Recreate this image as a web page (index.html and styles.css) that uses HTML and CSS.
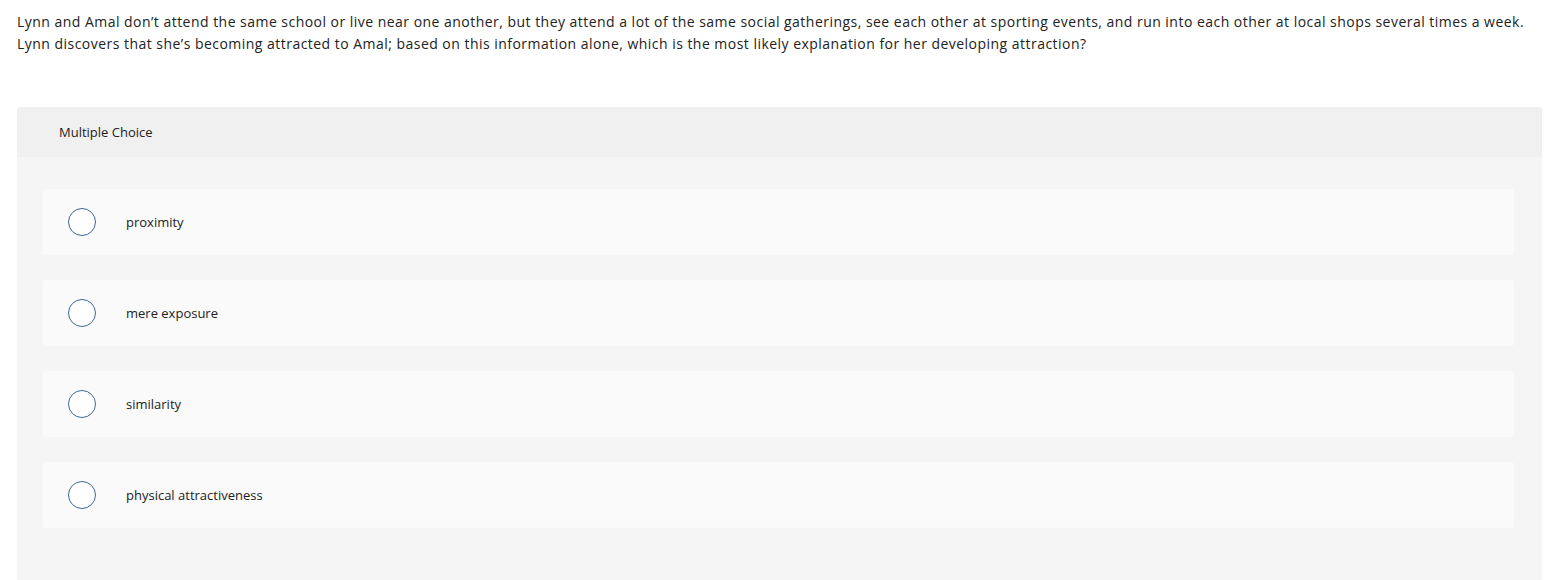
FILE: index.html
```html
<!DOCTYPE html>
<html>
<head>
<meta charset="utf-8">
<link rel="stylesheet" href="styles.css">
</head>
<body>
<div class="page">
  <p class="question">Lynn and Amal don’t attend the same school or live near one another, but they attend a lot of the same social gatherings, see each other at sporting events, and run into each other at local shops several times a week.<br>Lynn discovers that she’s becoming attracted to Amal; based on this information alone, which is the most likely explanation for her developing attraction?</p>
  <div class="panel">
    <div class="panel-head">Multiple Choice</div>
    <div class="panel-body">
      <div class="option"><span class="radio"></span><span class="label">proximity</span></div>
      <div class="option"><span class="radio"></span><span class="label">mere exposure</span></div>
      <div class="option"><span class="radio"></span><span class="label">similarity</span></div>
      <div class="option"><span class="radio"></span><span class="label">physical attractiveness</span></div>
    </div>
  </div>
</div>
</body>
</html>
```

FILE: styles.css
```css
html, body {
  margin: 0;
  padding: 0;
  background: #fff;
}
body {
  font-family: "Open Sans", "Liberation Sans", sans-serif;
  color: #222;
}
.page {
  padding: 11px 17px 0 17px;
}
.question {
  margin: 0;
  font-size: 14px;
  letter-spacing: 0.47px;
  line-height: 22px;
  color: #222;
  white-space: nowrap;
}
.panel {
  margin-top: 52px;
  border-radius: 3px 3px 0 0;
  overflow: hidden;
  background: #f5f5f5;
}
.panel-head {
  height: 50px;
  display: flex;
  align-items: center;
  padding-left: 42px;
  background: #f0f0f0;
  font-size: 13px;
  color: #222;
}
.panel-body {
  padding: 32px 28px 60px 26px;
  display: flex;
  flex-direction: column;
  gap: 25px;
}
.option {
  height: 66px;
  background: #fafafa;
  border-radius: 3px;
  display: flex;
  align-items: center;
  padding-left: 25px;
}
.radio {
  width: 26px;
  height: 26px;
  border: 1.4px solid #3d6a96;
  border-radius: 50%;
  background: #fff;
  flex: none;
}
.label {
  margin-left: 30px;
  font-size: 13px;
  color: #222;
}
```
